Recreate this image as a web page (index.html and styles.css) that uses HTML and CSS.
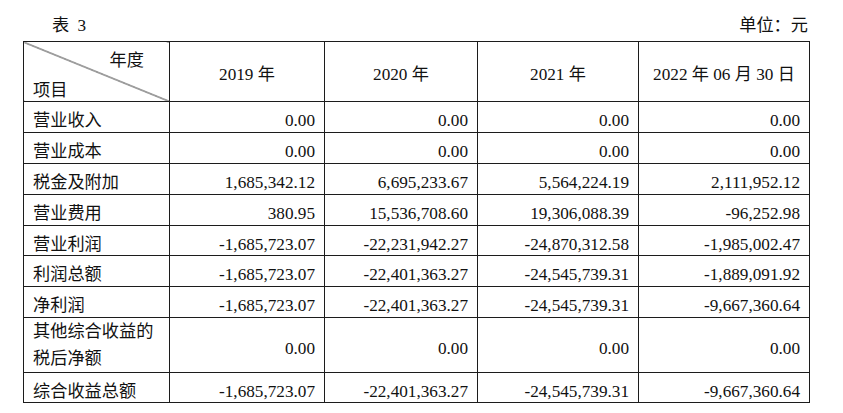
FILE: index.html
```html
<!DOCTYPE html>
<html lang="zh">
<head>
<meta charset="utf-8">
<link rel="stylesheet" href="styles.css">
</head>
<body>
<div class="page">
  <div class="caption">
    <span class="title">表 3</span>
    <span class="unit">单位：元</span>
  </div>
  <table class="fin">
    <colgroup>
      <col class="c-label"><col class="c-2019"><col class="c-2020"><col class="c-2021"><col class="c-2022">
    </colgroup>
    <thead>
      <tr class="head">
        <th class="corner">
          <div class="corner-in">
            <span class="corner-top">年度</span>
            <span class="corner-bottom">项目</span>
          </div>
        </th>
        <th>2019 年</th>
        <th>2020 年</th>
        <th>2021 年</th>
        <th>2022 年 06 月 30 日</th>
      </tr>
    </thead>
    <tbody>
      <tr><td class="label">营业收入</td><td>0.00</td><td>0.00</td><td>0.00</td><td>0.00</td></tr>
      <tr><td class="label">营业成本</td><td>0.00</td><td>0.00</td><td>0.00</td><td>0.00</td></tr>
      <tr><td class="label">税金及附加</td><td>1,685,342.12</td><td>6,695,233.67</td><td>5,564,224.19</td><td>2,111,952.12</td></tr>
      <tr><td class="label">营业费用</td><td>380.95</td><td>15,536,708.60</td><td>19,306,088.39</td><td>-96,252.98</td></tr>
      <tr class="r30"><td class="label">营业利润</td><td>-1,685,723.07</td><td>-22,231,942.27</td><td>-24,870,312.58</td><td>-1,985,002.47</td></tr>
      <tr><td class="label">利润总额</td><td>-1,685,723.07</td><td>-22,401,363.27</td><td>-24,545,739.31</td><td>-1,889,091.92</td></tr>
      <tr><td class="label">净利润</td><td>-1,685,723.07</td><td>-22,401,363.27</td><td>-24,545,739.31</td><td>-9,667,360.64</td></tr>
      <tr class="tall"><td class="label two">其他综合收益的<br>税后净额</td><td>0.00</td><td>0.00</td><td>0.00</td><td>0.00</td></tr>
      <tr class="r30"><td class="label">综合收益总额</td><td>-1,685,723.07</td><td>-22,401,363.27</td><td>-24,545,739.31</td><td>-9,667,360.64</td></tr>
    </tbody>
  </table>
</div>
</body>
</html>
```

FILE: styles.css
```css
html, body {
  margin: 0;
  padding: 0;
  background: #fff;
}
body {
  font-family: "Liberation Serif", "Noto Sans CJK SC", serif;
  font-size: 17.2px;
  color: #111;
}
.page {
  padding: 16px 0 0 23px;
  width: 786px;
}
.caption {
  display: flex;
  justify-content: space-between;
  height: 20px;
  line-height: 20px;
  margin-bottom: 5px;
}
.title {
  padding-left: 29px;
  word-spacing: 4px;
}
.unit {
  padding-right: 1px;
}
.fin {
  border-collapse: collapse;
  table-layout: fixed;
  width: 786px;
}
.c-label { width: 146px; }
.c-2019 { width: 155px; }
.c-2020 { width: 153px; }
.c-2021 { width: 161px; }
.c-2022 { width: 171px; }
.fin tr { height: 31px; }
.fin tr.r30 { height: 30px; }
.fin tr.tall { height: 55px; }
.fin tr.head { height: 60px; }
.fin th, .fin td {
  border: 1px solid #1c1c1c;
  font-weight: normal;
  line-height: 20px;
  padding: 8px 9px 0 9px;
  vertical-align: middle;
  text-align: right;
  white-space: nowrap;
  overflow: hidden;
}
.fin tr.head th {
  text-align: center;
  padding: 6px 4px 0 4px;
}
.fin tr.head th.corner {
  padding: 0;
  background: linear-gradient(to top right, transparent calc(50% - 0.8px), #1c1c1c 50%, transparent calc(50% + 0.8px));
}
.corner-in {
  height: 58px;
  display: flex;
  flex-direction: column;
  justify-content: space-between;
  padding: 8px 25px 0 9px;
  box-sizing: border-box;
}
.corner-top {
  align-self: flex-end;
  line-height: 20px;
}
.corner-bottom {
  align-self: flex-start;
  line-height: 20px;
}
.fin td.label {
  text-align: left;
}
.fin td.two {
  line-height: 27px;
  padding-top: 0;
  padding-bottom: 0;
  white-space: normal;
}
```
